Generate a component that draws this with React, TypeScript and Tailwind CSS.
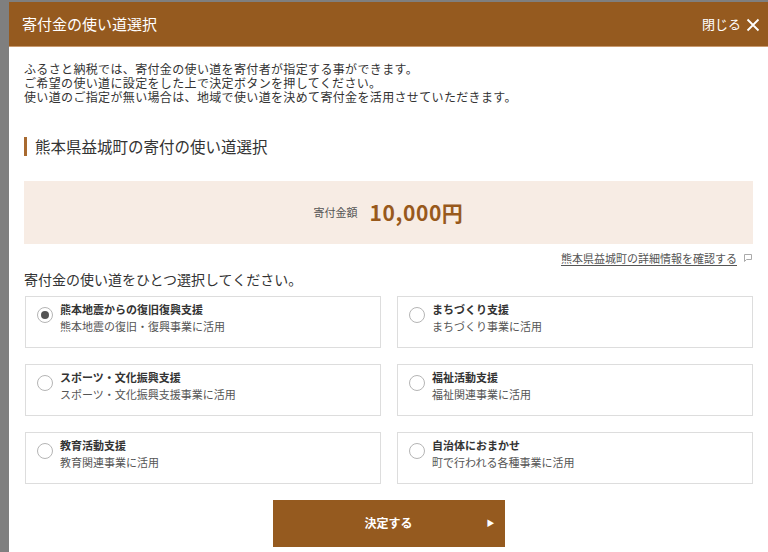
import { useState } from "react";

type Use = { title: string; desc: string };

const uses: Use[] = [
  { title: "熊本地震からの復旧復興支援", desc: "熊本地震の復旧・復興事業に活用" },
  { title: "まちづくり支援", desc: "まちづくり事業に活用" },
  { title: "スポーツ・文化振興支援", desc: "スポーツ・文化振興支援事業に活用" },
  { title: "福祉活動支援", desc: "福祉関連事業に活用" },
  { title: "教育活動支援", desc: "教育関連事業に活用" },
  { title: "自治体におまかせ", desc: "町で行われる各種事業に活用" },
];

const font = { fontFamily: '"Noto Sans CJK JP", "Noto Sans", sans-serif' };

function Radio({ checked }: { checked: boolean }) {
  return (
    <span className="flex h-[16px] w-[16px] shrink-0 items-center justify-center rounded-full border border-[#b5b5b5] bg-white">
      {checked && <span className="h-[8px] w-[8px] rounded-full bg-[#555]" />}
    </span>
  );
}

export default function App() {
  const [selected, setSelected] = useState(0);

  return (
    <div className="h-[552px] w-[768px] overflow-hidden bg-[#7f7f7f] pt-[2px] pl-[9px]" style={font}>
      <div className="h-full bg-white">
        <header className="flex h-[45px] items-center justify-between border-b border-[#c99a6f] bg-[#955a1f] pl-[13px] pr-[8px] text-white">
          <h1 className="text-[15px] font-normal">寄付金の使い道選択</h1>
          <button className="flex items-center gap-[5px] text-[13px]">
            閉じる
            <svg width="14" height="14" viewBox="0 0 14 14" className="mt-[1px]">
              <path d="M1.5 1.5 L12.5 12.5 M12.5 1.5 L1.5 12.5" stroke="white" strokeWidth="1.8" />
            </svg>
          </button>
        </header>

        <div className="px-[15px]">
          <div className="mt-[15px] flex flex-col text-[12px] tracking-[0.35px] text-[#333]">
            <p className="h-[14px] leading-[14px]">ふるさと納税では、寄付金の使い道を寄付者が指定する事ができます。</p>
            <p className="h-[14px] leading-[14px]">ご希望の使い道に設定をした上で決定ボタンを押してください。</p>
            <p className="h-[14px] leading-[14px]">使い道のご指定が無い場合は、地域で使い道を決めて寄付金を活用させていただきます。</p>
          </div>

          <h2 className="mt-[33px] border-l-[3px] border-[#a86a30] pl-[8px] text-[15.5px] leading-[19px] text-[#333]">
            熊本県益城町の寄付の使い道選択
          </h2>

          <div className="mt-[25px] flex h-[63px] items-center justify-center gap-[12px] bg-[#f7ece4]">
            <span className="text-[11px] text-[#555]">寄付金額</span>
            <span className="text-[21px] font-bold tracking-[0.6px] text-[#98591c]">10,000円</span>
          </div>

          <div className="mt-[6px] flex items-center justify-end gap-[7px] pr-[1px]">
            <a className="text-[11px] text-[#555] underline underline-offset-2">熊本県益城町の詳細情報を確認する </a>
            <svg width="8" height="8" viewBox="0 0 8 8">
              <path d="M0.5 0.5 H7.5 V5.5 H2.5 L0.5 7.5 Z" fill="none" stroke="#aaa" strokeWidth="1" />
            </svg>
          </div>

          <p className="mt-[3px] text-[14px] leading-[18px] text-[#333]">寄付金の使い道をひとつ選択してください。</p>

          <div className="mt-[8px] grid grid-cols-2 gap-x-[16px] gap-y-[16px] pl-[1px]">
            {uses.map((u, i) => (
              <label
                key={u.title}
                onClick={() => setSelected(i)}
                className="flex h-[52px] cursor-pointer items-start gap-[7px] border border-[#ddd] pl-[11px] pt-[4px]"
              >
                <span className="mt-[6px]">
                  <Radio checked={selected === i} />
                </span>
                <span className="flex flex-col">
                  <span className="text-[11px] font-bold leading-[17px] text-[#333]">{u.title}</span>
                  <span className="text-[11px] leading-[17px] text-[#555]">{u.desc}</span>
                </span>
              </label>
            ))}
          </div>

          <div className="mt-[16px] flex justify-center">
            <button className="relative flex h-[47px] w-[232px] items-center justify-center bg-[#955a1f] text-[12px] font-bold text-white">
              決定する
              <span className="absolute right-[10px] text-[8px]">▶</span>
            </button>
          </div>
        </div>
      </div>
    </div>
  );
}
